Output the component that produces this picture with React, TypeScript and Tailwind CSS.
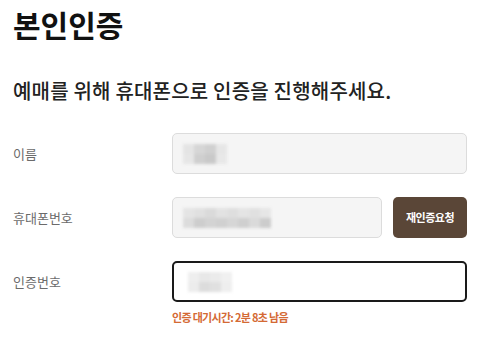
import React from "react";

const FONT = { fontFamily: '"Noto Sans CJK KR", "Noto Sans", sans-serif' };

// blurred placeholder value, like a masked screenshot
function Masked({ cells }: { cells: string[][] }) {
  return (
    <div className="flex flex-col blur-[1.5px]">
      {cells.map((row, i) => (
        <div key={i} className="flex">
          {row.map((c, j) => (
            <div key={j} className="h-[10px] w-[11px]" style={{ background: c }} />
          ))}
        </div>
      ))}
    </div>
  );
}

function Row({
  label,
  children,
}: {
  label: string;
  children: React.ReactNode;
}) {
  return (
    <div className="flex items-center">
      <div className="w-[159px] shrink-0 text-[13px] leading-none text-[#6b6b6b]">{label}</div>
      <div className="flex flex-1 gap-[11px]">{children}</div>
    </div>
  );
}

export default function App() {
  return (
    <div className="h-[340px] w-[483px] overflow-hidden bg-white pl-[13px] pr-[16px]" style={FONT}>
      <h1 className="mt-[9px] text-[30px] font-bold leading-none text-[#111]">
        본인인증
      </h1>
      <p className="mt-[42px] text-[20px] font-medium leading-none tracking-[0.2px] text-[#222]">
        예매를 위해 휴대폰으로 인증을 진행해주세요.
      </p>

      <div className="mt-[32px] flex flex-col gap-[23px]">
        <Row label="이름">
          <div className="flex h-[41px] flex-1 items-center rounded-[5px] border border-[#dcdcdc] bg-[#f5f5f5] pl-[10px]">
            <Masked
              cells={[
                ["#e4e4e4", "#d6d6d6", "#d0d0d0", "#e6e6e6"],
                ["#e6e6e6", "#cfcfcf", "#c9c9c9", "#e8e8e8"],
              ]}
            />
          </div>
        </Row>
        <Row label="휴대폰번호">
          <div className="flex h-[41px] flex-1 items-center rounded-[5px] border border-[#dcdcdc] bg-[#f5f5f5] pl-[10px]">
            <Masked
              cells={[
                ["#e4e4e4", "#e0e0e0", "#dadada", "#e2e2e2", "#dedede", "#e4e4e4", "#e0e0e0", "#e6e6e6"],
                ["#dcdcdc", "#cdcdcd", "#d3d3d3", "#d0d0d0", "#d6d6d6", "#cfcfcf", "#dadada", "#cccccc"],
              ]}
            />
          </div>
          <button className="h-[41px] w-[74px] shrink-0 rounded-[5px] bg-[#5a4637] text-[11px] font-bold tracking-[-0.5px] text-white">
            재인증요청
          </button>
        </Row>
        <Row label="인증번호">
          <div className="flex h-[41px] flex-1 items-center rounded-[5px] border-2 border-[#1a1a1a] bg-white pl-[14px]">
            <Masked
              cells={[
                ["#eeeeee", "#e8e8e8", "#ebebeb", "#f0f0f0"],
                ["#ececec", "#dcdcdc", "#e0e0e0", "#eeeeee"],
              ]}
            />
          </div>
        </Row>
      </div>

      <p className="ml-[159px] mt-[10px] text-[11px] font-bold leading-none tracking-[-0.7px] text-[#d46a35]">
        인증 대기시간: 2분 8초 남음
      </p>
    </div>
  );
}
